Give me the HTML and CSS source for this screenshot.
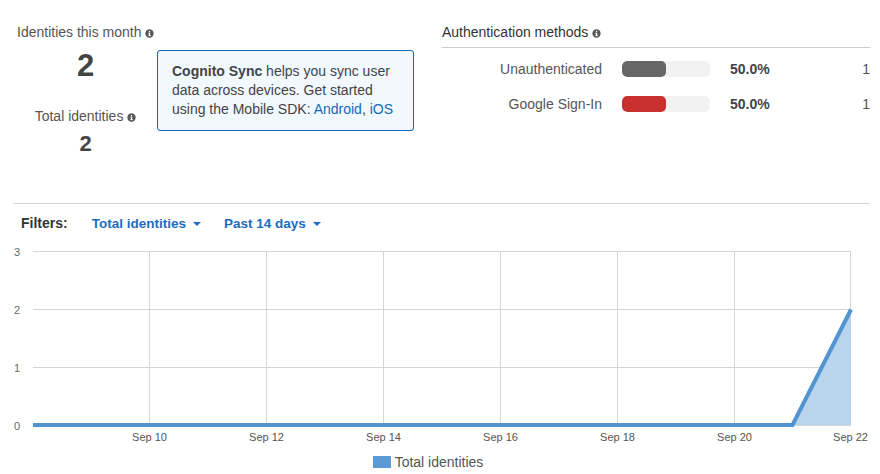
FILE: index.html
```html
<!DOCTYPE html>
<html>
<head>
<meta charset="utf-8">
<link rel="stylesheet" href="styles.css">
</head>
<body>
<div class="page">
  <section class="top">
    <div class="counts">
      <div class="count-label">Identities this month <svg class="info" viewBox="0 0 10 10"><circle cx="5" cy="5" r="4.6"/><rect x="4.3" y="4.2" width="1.5" height="3.6" fill="#fff"/><rect x="3.6" y="4.2" width="1.5" height="0.9" fill="#fff"/><rect x="3.6" y="7" width="3" height="0.9" fill="#fff"/><circle cx="5" cy="2.8" r="0.85" fill="#fff"/></svg></div>
      <div class="count-big">2</div>
      <div class="count-label second">Total identities <svg class="info" viewBox="0 0 10 10"><circle cx="5" cy="5" r="4.6"/><rect x="4.3" y="4.2" width="1.5" height="3.6" fill="#fff"/><rect x="3.6" y="4.2" width="1.5" height="0.9" fill="#fff"/><rect x="3.6" y="7" width="3" height="0.9" fill="#fff"/><circle cx="5" cy="2.8" r="0.85" fill="#fff"/></svg></div>
      <div class="count-med">2</div>
    </div>
    <div class="callout">
      <b>Cognito Sync</b> helps you sync user data across devices. Get started using the Mobile SDK: <a href="#">Android</a>, <a href="#">iOS</a>
    </div>
    <div class="auth">
      <div class="auth-head">Authentication methods <svg class="info" viewBox="0 0 10 10"><circle cx="5" cy="5" r="4.6"/><rect x="4.3" y="4.2" width="1.5" height="3.6" fill="#fff"/><rect x="3.6" y="4.2" width="1.5" height="0.9" fill="#fff"/><rect x="3.6" y="7" width="3" height="0.9" fill="#fff"/><circle cx="5" cy="2.8" r="0.85" fill="#fff"/></svg></div>
      <div class="auth-row">
        <span class="auth-name">Unauthenticated</span>
        <span class="bar"><span class="fill gray" style="width:50%"></span></span>
        <span class="pct">50.0%</span>
        <span class="num">1</span>
      </div>
      <div class="auth-row">
        <span class="auth-name">Google Sign-In</span>
        <span class="bar"><span class="fill red" style="width:50%"></span></span>
        <span class="pct">50.0%</span>
        <span class="num">1</span>
      </div>
    </div>
  </section>
  <div class="filters">
    <span class="filters-label">Filters:</span>
    <a class="filter" href="#">Total identities <span class="caret"></span></a>
    <a class="filter" href="#">Past 14 days <span class="caret"></span></a>
  </div>
</div>
<svg class="chart" width="880" height="206" viewBox="0 244 880 206">
  <g class="grid">
    <line x1="33" y1="251.5" x2="851" y2="251.5"/>
    <line x1="33" y1="309.5" x2="851" y2="309.5"/>
    <line x1="33" y1="367.5" x2="851" y2="367.5"/>
    <line x1="33" y1="425.5" x2="851" y2="425.5"/>
    <line x1="149.5" y1="251" x2="149.5" y2="426"/>
    <line x1="266.5" y1="251" x2="266.5" y2="426"/>
    <line x1="383.5" y1="251" x2="383.5" y2="426"/>
    <line x1="500.5" y1="251" x2="500.5" y2="426"/>
    <line x1="617.5" y1="251" x2="617.5" y2="426"/>
    <line x1="734.5" y1="251" x2="734.5" y2="426"/>
    <line x1="850.5" y1="251" x2="850.5" y2="426"/>
  </g>
  <g class="ylab">
    <text x="14" y="256">3</text>
    <text x="14" y="314">2</text>
    <text x="14" y="372">1</text>
    <text x="14" y="430">0</text>
  </g>
  <polygon class="area" points="792.5,425 851,309 851,425"/>
  <polyline class="line" points="33,425 792.5,425 851,309.5"/>
  <g class="xlab">
    <text x="149.5" y="441">Sep 10</text>
    <text x="266.5" y="441">Sep 12</text>
    <text x="383.5" y="441">Sep 14</text>
    <text x="500.5" y="441">Sep 16</text>
    <text x="617.5" y="441">Sep 18</text>
    <text x="734.5" y="441">Sep 20</text>
    <text x="850.5" y="441">Sep 22</text>
  </g>
</svg>
<div class="legend"><span class="swatch"></span>Total identities</div>
</body>
</html>
```
FILE: styles.css
```css
html, body {
  margin: 0;
  padding: 0;
  background: #fff;
  font-family: "Liberation Sans", Arial, sans-serif;
  color: #444;
}
.page {
  padding: 0 10px 0 14px;
}
.top {
  display: flex;
  align-items: flex-start;
  height: 204px;
  box-sizing: border-box;
  border-bottom: 1px solid #d5d5d5;
  padding: 23px 0 0 3px;
}
.counts {
  width: 137px;
  text-align: center;
}
.count-label {
  font-size: 14px;
  line-height: 18px;
  color: #555;
  white-space: nowrap;
}
.count-label.second {
  margin-top: 24px;
}
.info {
  width: 9px;
  height: 9px;
  fill: #555;
  vertical-align: -1px;
}
.count-big {
  font-size: 31px;
  font-weight: bold;
  line-height: 34px;
  margin-top: 8px;
}
.count-med {
  font-size: 22px;
  font-weight: bold;
  line-height: 24px;
  margin-top: 7px;
}
.callout {
  margin-top: 27px;
  margin-left: 3px;
  width: 257px;
  height: 81px;
  box-sizing: border-box;
  border: 1px solid #1469b8;
  border-radius: 3px;
  background: #f1f8fe;
  padding: 11px 10px 0 14px;
  font-size: 14px;
  line-height: 19px;
  color: #444;
}
.callout a {
  color: #1469b8;
  text-decoration: none;
}
.auth {
  margin-left: 28px;
  flex: 1;
}
.auth-head {
  font-size: 14px;
  line-height: 18px;
  color: #333;
  padding-bottom: 6px;
  border-bottom: 1px solid #ccc;
}
.auth-row {
  display: flex;
  align-items: center;
  height: 35px;
  font-size: 14px;
}
.auth-head + .auth-row {
  margin-top: 3px;
}
.auth-name {
  width: 160px;
  text-align: right;
  color: #555;
}
.bar {
  margin-left: 20px;
  width: 88px;
  height: 16px;
  border-radius: 5px;
  background: #f2f2f2;
  display: flex;
  overflow: hidden;
}
.fill {
  height: 100%;
  border-radius: 5px;
}
.fill.gray { background: #666; }
.fill.red { background: #c7302e; }
.pct {
  margin-left: 20px;
  font-weight: bold;
  color: #444;
}
.num {
  flex: 1;
  text-align: right;
  color: #555;
}
.filters {
  display: flex;
  align-items: center;
  height: 40px;
  padding-left: 7px;
  padding-bottom: 1px;
  box-sizing: border-box;
}
.filters-label {
  font-size: 14px;
  font-weight: bold;
  color: #333;
  margin-top: -2px;
}
.filter {
  font-size: 13.5px;
  font-weight: bold;
  color: #1a6dbf;
  text-decoration: none;
  margin-left: 24px;
  display: flex;
  align-items: center;
}
.filter + .filter {
  margin-left: 23px;
}
.caret {
  display: inline-block;
  width: 0;
  height: 0;
  border-left: 4.5px solid transparent;
  border-right: 4.5px solid transparent;
  border-top: 4px solid #1a6dbf;
  margin-left: 7px;
}
.chart {
  display: block;
}
.grid line {
  stroke: #d6d6d6;
  stroke-width: 1;
}
.ylab text {
  font-family: "Liberation Sans", Arial, sans-serif;
  font-size: 11px;
  fill: #666;
}
.xlab text {
  font-family: "Liberation Sans", Arial, sans-serif;
  font-size: 11px;
  fill: #555;
  text-anchor: middle;
}
.area {
  fill: #b9d4ed;
}
.line {
  fill: none;
  stroke: #5294d0;
  stroke-width: 4;
}
.legend {
  display: flex;
  align-items: center;
  justify-content: center;
  height: 24px;
  font-size: 14px;
  color: #555;
  padding-right: 24px;
}
.swatch {
  width: 18px;
  height: 12px;
  background: #5b9bd5;
  margin-right: 4px;
}
```
